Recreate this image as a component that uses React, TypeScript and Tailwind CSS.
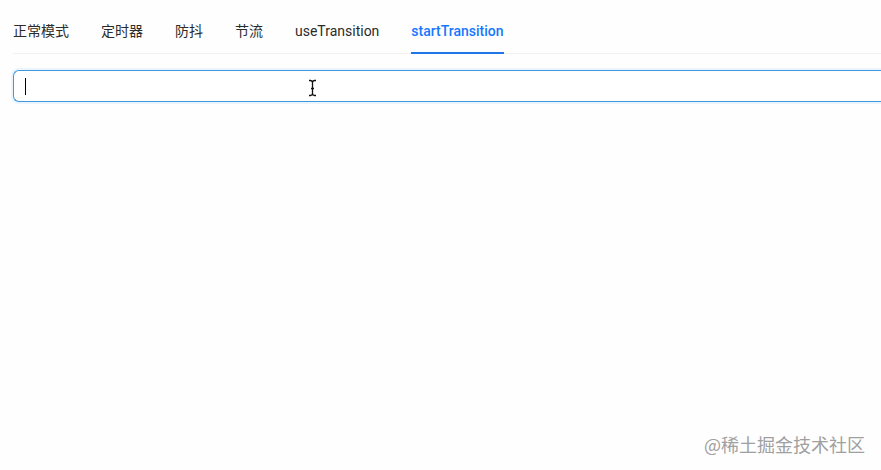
import { useState } from "react";

const tabs = [
  "正常模式",
  "定时器",
  "防抖",
  "节流",
  "useTransition",
  "startTransition",
];

function TextPointer() {
  return (
    <svg
      className="pointer-events-none absolute top-[9px] left-[295px] h-[18px] w-[9px]"
      viewBox="0 0 9 18"
      fill="none"
      stroke="#111111"
      strokeWidth="1.3"
      aria-hidden="true"
    >
      <path d="M1 1.5h1.5Q4.5 1.8 4.5 3.5Q4.5 1.8 6.5 1.5H8M4.5 3v12M1 16.5h1.5Q4.5 16.2 4.5 14.5Q4.5 16.2 6.5 16.5H8M3 9.5h3" />
    </svg>
  );
}

export default function App() {
  const [active, setActive] = useState("startTransition");
  const [value, setValue] = useState("");

  return (
    <main className="relative flex min-h-screen flex-col bg-[#fefefe] pt-2 pl-[13px] font-['Roboto','Noto_Sans_CJK_SC',sans-serif] text-sm text-[#2b2b2b]">
      <div role="tablist" className="flex gap-8 border-b border-[#f0f0f0]">
        {tabs.map((tab) => (
          <button
            key={tab}
            type="button"
            role="tab"
            aria-selected={tab === active}
            onClick={() => setActive(tab)}
            className={
              tab === active
                ? "-mb-px border-b-2 border-[#1f75e8] pt-3 pb-2.5 leading-[22px] font-medium whitespace-nowrap text-[#1677ff]"
                : "-mb-px border-b-2 border-transparent pt-3 pb-2.5 leading-[22px] whitespace-nowrap"
            }
          >
            {tab}
          </button>
        ))}
      </div>
      <div className="relative mt-4">
        <input
          type="text"
          aria-label="输入内容"
          value={value}
          onChange={(event) => setValue(event.target.value)}
          className="block h-8 w-full rounded-l-md border border-r-0 border-[#4296dc] bg-white px-3 caret-transparent shadow-[0_0_0_2px_#eaf5fe] outline-none"
        />
        <span className="pointer-events-none absolute top-2 left-3 h-[17px] w-px bg-black" />
        <TextPointer />
      </div>
      <p className="mt-auto mr-4 mb-3.5 self-end text-lg leading-6 text-[#a0a0a0] font-['Noto_Sans_CJK_SC',sans-serif] [text-shadow:1px_1px_0_#ffffff]">
        @稀土掘金技术社区
      </p>
    </main>
  );
}
